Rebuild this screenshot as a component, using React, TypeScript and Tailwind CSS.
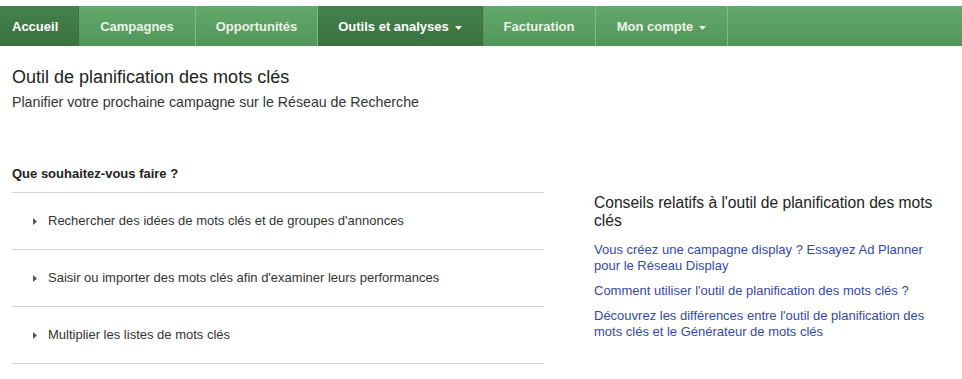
import React from 'react';

const tabs = [
  { label: 'Accueil', active: true, w: 'w-[79px] justify-start pl-[12px]' },
  { label: 'Campagnes', w: 'w-[117px] justify-center' },
  { label: 'Opportunités', w: 'w-[122px] justify-center' },
  { label: 'Outils et analyses', active: true, menu: true, w: 'w-[165px] justify-center' },
  { label: 'Facturation', w: 'w-[113px] justify-center' },
  { label: 'Mon compte', menu: true, w: 'w-[132px] justify-center' },
];

const tasks = [
  "Rechercher des idées de mots clés et de groupes d'annonces",
  "Saisir ou importer des mots clés afin d'examiner leurs performances",
  'Multiplier les listes de mots clés',
];

const Caret = () => (
  <svg width="7" height="4" viewBox="0 0 7 4" className="ml-[6px] mt-[1px]">
    <path d="M0 0h7L3.5 4z" fill="currentColor" />
  </svg>
);

const App = (): JSX.Element => {
  return (
    <div className="w-[962px] h-[379px] bg-white font-['Liberation_Sans',Arial,sans-serif] text-[#333] overflow-hidden">
      <div className="pt-[6px]">
        <nav className="flex h-[40px] bg-gradient-to-b from-[#63a96a] to-[#52955a]">
          {tabs.map((t) => (
            <div
              key={t.label}
              className={
                'flex shrink-0 items-center pt-[2px] border-r text-[13px] font-bold ' +
                t.w +
                ' ' +
                (t.active
                  ? 'bg-gradient-to-b from-[#44824b] to-[#3a7140] text-white border-[#3b7141]'
                  : 'text-[#e9f3e6] border-[#7dbc83]')
              }
            >
              {t.label}
              {t.menu && <Caret />}
            </div>
          ))}
        </nav>
      </div>

      <div className="flex">
        <div className="w-[544px] shrink-0 pl-[12px]">
          <h1 className="mt-[20px] text-[18px] leading-[22px] text-[#222]">Outil de planification des mots clés</h1>
          <p className="mt-[6px] text-[14.2px] leading-[17px] text-[#333]">
            Planifier votre prochaine campagne sur le Réseau de Recherche
          </p>
          <h2 className="mt-[55px] text-[13px] leading-[16px] font-bold text-[#222]">Que souhaitez-vous faire ?</h2>
          <div className="mt-[10px] border-t border-[#d4d4d4]">
            {tasks.map((t) => (
              <div key={t} className="flex items-center h-[57px] border-b border-[#d4d4d4] pl-[21px] text-[13px] text-[#333]">
                <svg width="4" height="7" viewBox="0 0 4 7" className="mr-[11px] shrink-0">
                  <path d="M0 0l4 3.5L0 7z" fill="#555" />
                </svg>
                {t}
              </div>
            ))}
          </div>
        </div>

        <div className="ml-[50px] w-[350px] shrink-0 pt-[148px]">
          <h3 className="text-[15.6px] leading-[18px] text-[#222]">
            Conseils relatifs à l'outil de planification des mots clés
          </h3>
          <div className="mt-[12px] flex flex-col gap-[9px] text-[13px] leading-[16px] text-[#3449a8]">
            <a>Vous créez une campagne display ? Essayez Ad Planner pour le Réseau Display</a>
            <a>Comment utiliser l'outil de planification des mots clés ?</a>
            <a>Découvrez les différences entre l'outil de planification des mots clés et le Générateur de mots clés</a>
          </div>
        </div>
      </div>
    </div>
  );
};

export default App;
